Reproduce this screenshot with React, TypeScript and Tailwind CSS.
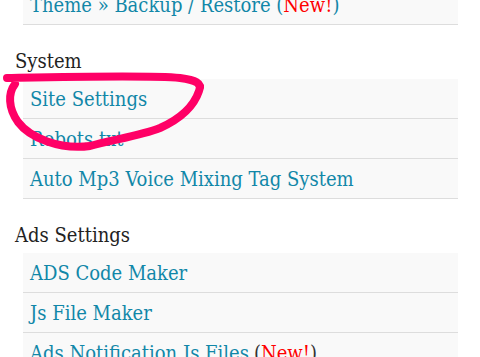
const serif = { fontFamily: "'DejaVu Serif Condensed', 'DejaVu Serif', 'Liberation Serif', serif" };

function Row({ children, first }: { children: React.ReactNode; first?: boolean }) {
  return (
    <li
      className={
        "h-[40px] flex items-center pl-[7px] bg-[#f9f9f9] border-b border-[#dddddd] text-[#1187a8] whitespace-nowrap" +
        (first ? " mt-[-15px]" : "")
      }
    >
      {children}
    </li>
  );
}

function Heading({ children }: { children: React.ReactNode }) {
  return (
    <h3 className="h-[54px] pt-[25px] pl-[15px] text-[#222222] leading-[23px] text-[20px] font-normal">
      {children}
    </h3>
  );
}

export default function App() {
  return (
    <div className="relative w-[480px] h-[357px] overflow-hidden bg-white text-[20px]" style={serif}>
      <ul className="ml-[23px] w-[435px]">
        <Row first>
          Theme » Backup / Restore (<span className="text-[#ff0000]">New!</span>)
        </Row>
      </ul>
      <Heading>System</Heading>
      <ul className="ml-[23px] w-[435px]">
        <Row>Site Settings</Row>
        <Row>Robots.txt</Row>
        <Row>Auto Mp3 Voice Mixing Tag System</Row>
      </ul>
      <Heading>Ads Settings</Heading>
      <ul className="ml-[23px] w-[435px]">
        <Row>ADS Code Maker</Row>
        <Row>Js File Maker</Row>
        <Row>
          Ads Notification Js Files <span className="text-[#333333] ml-[5px]">(</span>
          <span className="text-[#ff0000]">New!</span>
          <span className="text-[#333333]">)</span>
        </Row>
      </ul>
      <svg
        className="absolute left-0 top-0 pointer-events-none"
        width="480"
        height="357"
        viewBox="0 0 480 357"
        fill="none"
      >
        <path
          d="M 7 78 C 60 77, 150 75, 180 78 C 195 80, 203 83, 199 91 C 194 106, 180 119, 160 128 C 140 136, 110 140, 90 146 C 60 150, 30 138, 18 122 C 8 108, 8 93, 15 84"
          stroke="#ff0066"
          strokeWidth="8"
          strokeLinecap="round"
          strokeLinejoin="round"
        />
      </svg>
    </div>
  );
}
